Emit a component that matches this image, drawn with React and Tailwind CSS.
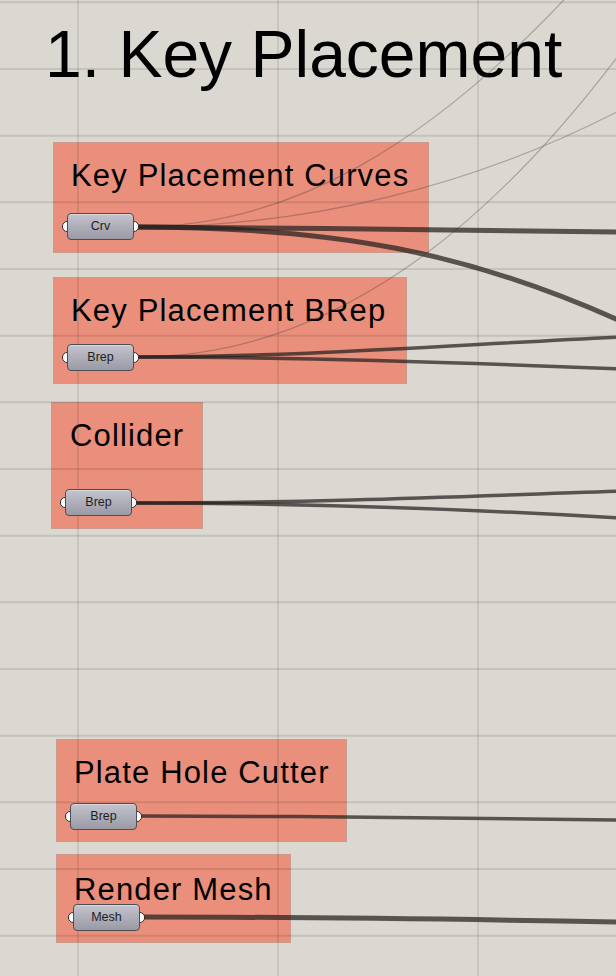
import React from "react";

const groups = [
  { title: "Key Placement Curves", cls: "left-[53px] top-[142px] w-[376px] h-[111px]", tcls: "left-[17px] top-[17px]" },
  { title: "Key Placement BRep", cls: "left-[53px] top-[277px] w-[354px] h-[107px]", tcls: "left-[17px] top-[17px]" },
  { title: "Collider", cls: "left-[51px] top-[402px] w-[152px] h-[127px]", tcls: "left-[18px] top-[17px]" },
  { title: "Plate Hole Cutter", cls: "left-[56px] top-[739px] w-[291px] h-[103px]", tcls: "left-[17px] top-[17px]" },
  { title: "Render Mesh", cls: "left-[56px] top-[854px] w-[235px] h-[89px]", tcls: "left-[17px] top-[19px]" },
];

const params = [
  { label: "Crv", cls: "left-[67px] top-[213px]" },
  { label: "Brep", cls: "left-[67px] top-[344px]" },
  { label: "Brep", cls: "left-[65px] top-[489px]" },
  { label: "Brep", cls: "left-[70px] top-[803px]" },
  { label: "Mesh", cls: "left-[73px] top-[904px]" },
];

function Param({ label, cls }) {
  return (
    <div className={`absolute ${cls} w-[67px] h-[27px]`}>
      <span className="absolute left-[-5px] top-[8px] w-[10px] h-[11px] rounded-full bg-white border border-[#2e2e2e]" />
      <span className="absolute right-[-5px] top-[8px] w-[10px] h-[11px] rounded-full bg-white border border-[#2e2e2e]" />
      <div className="relative flex items-center justify-center w-full h-full rounded-[4px] border border-[#4d4d52] bg-linear-to-b from-[#c4c4ce] to-[#9a9aa6] shadow-[inset_0_1px_0_rgba(255,255,255,0.35)]">
        <span className="text-[12.5px] leading-none text-[#1e1e22] font-['Liberation_Sans',Arial,sans-serif]">{label}</span>
      </div>
    </div>
  );
}

export default function App() {
  const hLines = [];
  for (let k = 0; k < 15; k++) hLines.push(2.3 + (200 / 3) * k);
  const vLines = [78, 278, 478];
  const thin = "rgba(60,58,55,0.33)";
  const wire = "rgba(34,32,30,0.72)";
  return (
    <div className="relative w-[616px] h-[976px] overflow-hidden bg-[#dbd8d1] font-['Liberation_Sans',Arial,sans-serif]">
      <div className="absolute left-[45px] top-[21px] text-[66px] leading-none tracking-[0px] text-black whitespace-nowrap">
        1. Key Placement
      </div>

      {groups.map((g, i) => (
        <div key={i} className={`absolute ${g.cls} bg-[#e98f7b] border border-[#c99a8e]`}>
          <div className={`absolute ${g.tcls} text-[31px] leading-none tracking-[1.15px] text-black whitespace-nowrap`}>
            {g.title}
          </div>
        </div>
      ))}

      <svg className="absolute left-0 top-0" width="616" height="976" viewBox="0 0 616 976">
        {hLines.map((y, i) => (
          <line key={"h" + i} x1="0" x2="616" y1={y} y2={y} stroke="rgba(0,0,0,0.1)" strokeWidth="2" />
        ))}
        {vLines.map((x, i) => (
          <line key={"v" + i} x1={x} x2={x} y1="0" y2="976" stroke="rgba(0,0,0,0.13)" strokeWidth="1.3" />
        ))}
        <g fill="none" stroke={thin} strokeWidth="1.2">
          <path d="M137,227 C290,227 430,145 575,-12" />
          <path d="M137,227 C300,227 470,190 630,105" />
          <path d="M137,357 C330,357 490,230 630,40" />
        </g>
        <g fill="none" stroke={wire} strokeLinecap="round">
          <path d="M137,227 C300,228 450,230 620,232" strokeWidth="5" />
          <path d="M137,227 C330,227 470,250 640,330" strokeWidth="5" />
          <path d="M137,357 C300,357 450,345 620,337" strokeWidth="3.5" />
          <path d="M137,357 C300,357 450,362 620,369" strokeWidth="3.5" />
          <path d="M133,503 C300,503 450,497 620,491" strokeWidth="3.5" />
          <path d="M133,503 C300,503 450,508 620,518" strokeWidth="3.5" />
          <path d="M140,816 C300,816 450,818 620,820" strokeWidth="3.5" />
          <path d="M143,917 C300,917 450,919 620,922" strokeWidth="5" />
        </g>
      </svg>

      {params.map((p, i) => (
        <Param key={i} {...p} />
      ))}
    </div>
  );
}
